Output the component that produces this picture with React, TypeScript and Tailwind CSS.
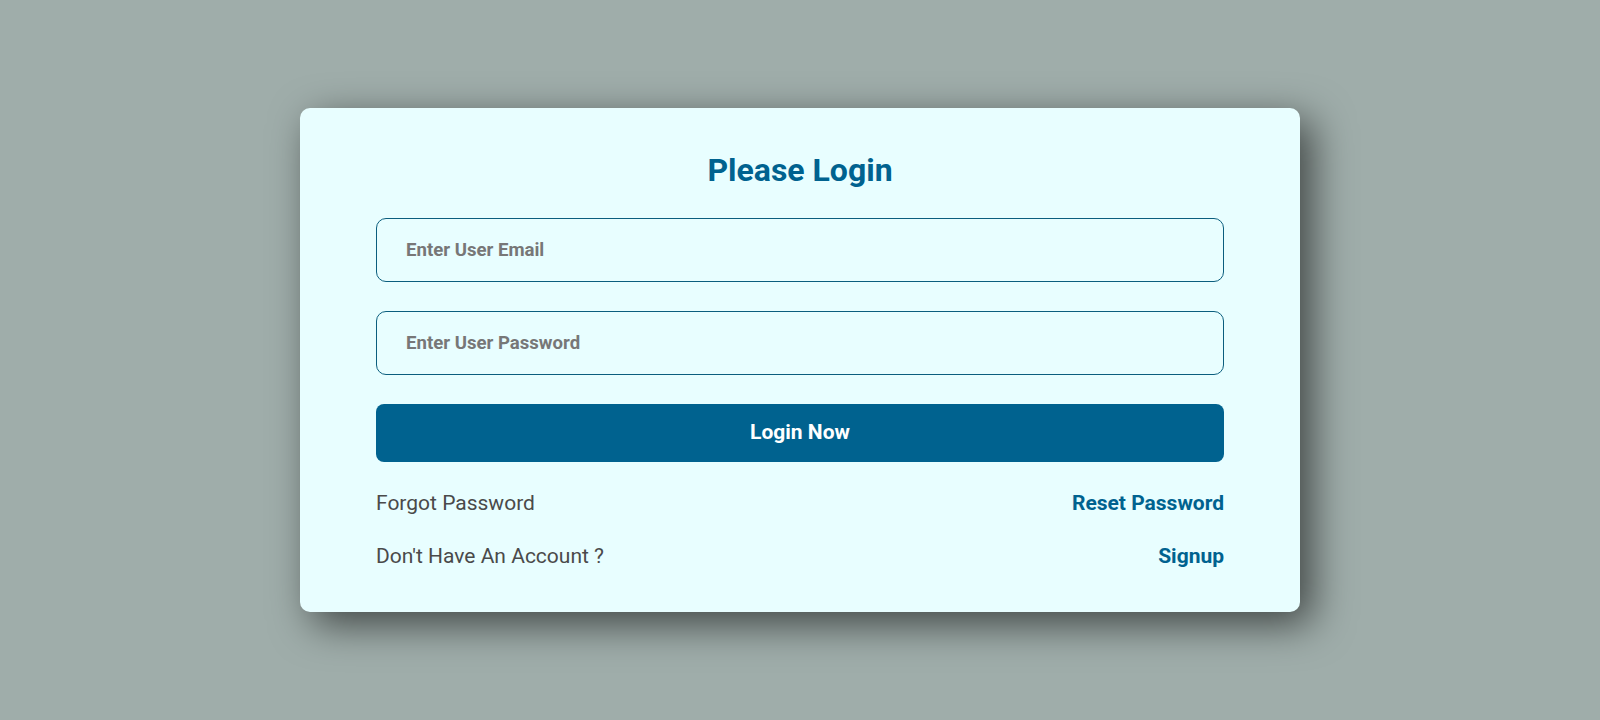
import React from "react";

export default function App() {
  return (
    <div
      className="w-full h-[720px] bg-[#9fadaa] flex justify-center pt-[108px]"
      style={{ fontFamily: "Roboto, 'Liberation Sans', sans-serif" }}
    >
      <div className="w-[1000px] h-[504px] bg-[#e8feff] rounded-[10px] shadow-[12px_12px_40px_rgba(0,0,0,0.6)] px-[76px] pt-[44px]">
        <h1 className="text-[32px] leading-[36px] font-bold text-[#00628f] text-center">
          Please Login
        </h1>
        <input
          type="email"
          placeholder="Enter User Email"
          className="mt-[30px] block w-full h-[64px] rounded-[10px] border border-[#0b5e7e] bg-transparent px-[29px] text-[18.6px] font-bold text-[#777] placeholder:text-[#777] outline-none"
        />
        <input
          type="password"
          placeholder="Enter User Password"
          className="mt-[29px] block w-full h-[64px] rounded-[10px] border border-[#0b5e7e] bg-transparent px-[29px] text-[18.6px] font-bold text-[#777] placeholder:text-[#777] outline-none"
        />
        <button className="mt-[29px] block w-full h-[58px] rounded-[8px] bg-[#00628f] text-white text-[21px] font-bold">
          Login Now
        </button>
        <div className="mt-[27px] flex justify-between text-[21px] leading-[28px]">
          <span className="text-[#4a4a4a]">Forgot Password</span>
          <a className="text-[#00628f] font-bold">Reset Password</a>
        </div>
        <div className="mt-[25px] flex justify-between text-[21px] leading-[28px]">
          <span className="text-[#4a4a4a]">Don't Have An Account ?</span>
          <a className="text-[#00628f] font-bold">Signup</a>
        </div>
      </div>
    </div>
  );
}
